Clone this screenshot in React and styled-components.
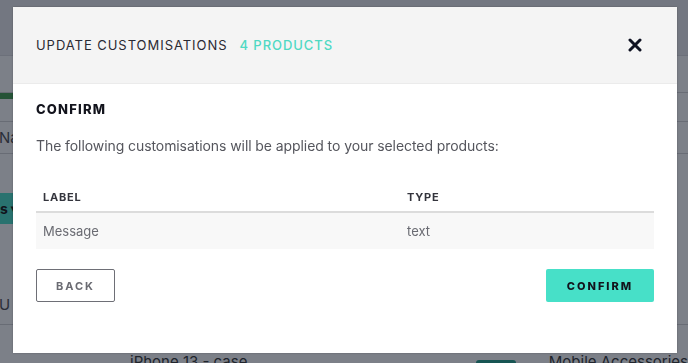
import React from 'react'
import styled, { createGlobalStyle } from 'styled-components'

const GlobalStyle = createGlobalStyle`
  html, body { margin: 0; padding: 0; }
  body {
    font-family: Inter, "Noto Sans", "Liberation Sans", sans-serif;
    background: #ffffff;
    overflow: hidden;
  }
`

const customisations = [{ label: 'Message', type: 'text' }]

const App = () => {
  return (
    <>
      <GlobalStyle />
      <Page>
        <TopBar />
        <Gap h={37} />
        <GreenRow>
          <GreenBar />
        </GreenRow>
        <Gap h={22} line />
        <TextRow h={31} line>
          <RowText>Na</RowText>
        </TextRow>
        <Gap h={39} />
        <TealButton>s ▾</TealButton>
        <Gap h={60} />
        <TextRow h={40} line>
          <RowText>U</RowText>
        </TextRow>
        <ProductRow>
          <ProductName>iPhone 13 - case</ProductName>
          <Tag />
          <Category>Mobile Accessories</Category>
        </ProductRow>
      </Page>

      <Overlay>
        <Modal>
          <Header>
            <Title>
              UPDATE CUSTOMISATIONS<Count>4 PRODUCTS</Count>
            </Title>
            <Close aria-label="close">
              <svg width="14" height="14" viewBox="0 0 14 14">
                <path d="M2 2 L12 12 M12 2 L2 12" stroke="#0f1222" strokeWidth="3" strokeLinecap="round" />
              </svg>
            </Close>
          </Header>
          <Body>
            <Heading>CONFIRM</Heading>
            <Intro>The following customisations will be applied to your selected products:</Intro>
            <Table>
              <HeadRow>
                <HeadCell>LABEL</HeadCell>
                <HeadCell>TYPE</HeadCell>
              </HeadRow>
              {customisations.map((c) => (
                <BodyRow key={c.label}>
                  <Cell>{c.label}</Cell>
                  <Cell>{c.type}</Cell>
                </BodyRow>
              ))}
            </Table>
            <Footer>
              <OutlineButton>BACK</OutlineButton>
              <PrimaryButton>CONFIRM</PrimaryButton>
            </Footer>
          </Body>
        </Modal>
      </Overlay>
    </>
  )
}

export default App

const Page = styled.div`
  width: 688px;
  height: 363px;
  display: flex;
  flex-direction: column;
  background: #fff;
  overflow: hidden;
`
const TopBar = styled.div`
  height: 55px;
  flex-shrink: 0;
  background: #ececef;
  border-bottom: 1px solid #dcdce0;
`
const Gap = styled.div`
  height: ${(p) => p.h}px;
  flex-shrink: 0;
  border-bottom: ${(p) => (p.line ? '1px solid #d2d2d6' : '0')};
`
const GreenRow = styled.div`
  height: 6px;
  flex-shrink: 0;
  border-top: 1px solid #d2d2d6;
  margin-top: -1px;
`
const GreenBar = styled.div`
  width: 40px;
  height: 6px;
  background: #3f9c4c;
`
const TextRow = styled.div`
  height: ${(p) => p.h}px;
  flex-shrink: 0;
  display: flex;
  align-items: center;
  border-bottom: ${(p) => (p.line ? '1px solid #d2d2d6' : '0')};
`
const RowText = styled.span`
  font-size: 15px;
  color: #4a4a50;
  margin-left: -1px;
`
const TealButton = styled.div`
  height: 31px;
  width: 60px;
  flex-shrink: 0;
  margin-left: -40px;
  background: #47e0c8;
  display: flex;
  align-items: center;
  padding-left: 40px;
  font-size: 14px;
  font-weight: 700;
  color: #111;
  white-space: nowrap;
`
const ProductRow = styled.div`
  flex-shrink: 0;
  height: 40px;
  display: flex;
  align-items: flex-start;
  padding-top: 27px;
`
const ProductName = styled.span`
  font-size: 15px;
  color: #333;
  margin-left: 130px;
  white-space: nowrap;
`
const Tag = styled.div`
  width: 50px;
  height: 20px;
  background: #1fa08a;
  border-radius: 3px;
  margin: 8px 0 0 229px;
`
const Category = styled.span`
  font-size: 15px;
  color: #333;
  margin-left: 33px;
  white-space: nowrap;
`

const Overlay = styled.div`
  position: fixed;
  inset: 0;
  background: rgba(17, 24, 39, 0.55);
  padding: 7px 11px 10px 13px;
  box-sizing: border-box;
`
const Modal = styled.div`
  width: 664px;
  height: 346px;
  background: #fff;
  display: flex;
  flex-direction: column;
  box-shadow: 0 0 2px rgba(0, 0, 0, 0.25);
`
const Header = styled.div`
  height: 76px;
  flex-shrink: 0;
  background: #f4f4f4;
  border-bottom: 1px solid #ebebeb;
  display: flex;
  align-items: center;
  justify-content: space-between;
  padding: 0 35px 0 23px;
`
const Title = styled.h1`
  margin: 0;
  font-size: 13px;
  font-weight: 400;
  letter-spacing: 0.95px;
  color: #2a2a33;
`
const Count = styled.span`
  margin-left: 12px;
  color: #4fd9c3;
  font-weight: 500;
`
const Close = styled.button`
  border: 0;
  background: none;
  padding: 0;
  width: 14px;
  height: 14px;
  display: flex;
  cursor: pointer;
`
const Body = styled.div`
  padding: 17px 23px 0;
  display: flex;
  flex-direction: column;
`
const Heading = styled.h2`
  margin: 0;
  font-size: 13px;
  line-height: 16px;
  font-weight: 800;
  letter-spacing: 1.2px;
  color: #12131c;
`
const Intro = styled.p`
  margin: 19px 0 0;
  font-size: 14px;
  line-height: 20px;
  letter-spacing: -0.08px;
  color: #55565d;
`
const Table = styled.div`
  margin-top: 27px;
  display: flex;
  flex-direction: column;
`
const HeadRow = styled.div`
  display: grid;
  grid-template-columns: 364px 1fr;
  height: 28px;
  align-items: center;
  border-bottom: 2px solid #dcdcdc;
`
const HeadCell = styled.div`
  padding-left: 7px;
  font-size: 11px;
  font-weight: 700;
  letter-spacing: 0.8px;
  color: #34353d;
`
const BodyRow = styled.div`
  display: grid;
  grid-template-columns: 364px 1fr;
  height: 36px;
  align-items: center;
  background: #f8f8f8;
`
const Cell = styled.div`
  padding-left: 7px;
  font-size: 13px;
  color: #6a6b72;
`
const Footer = styled.div`
  margin-top: 20px;
  display: flex;
  justify-content: space-between;
`
const OutlineButton = styled.button`
  width: 79px;
  height: 33px;
  background: #fff;
  border: 1px solid #6e6f76;
  border-radius: 2px;
  font-family: inherit;
  font-size: 11px;
  font-weight: 700;
  letter-spacing: 2px;
  color: #6a6b72;
  cursor: pointer;
`
const PrimaryButton = styled.button`
  width: 108px;
  height: 33px;
  background: #47e0c8;
  border: 0;
  border-radius: 2px;
  font-family: inherit;
  font-size: 11px;
  font-weight: 800;
  letter-spacing: 2px;
  color: #12131c;
  cursor: pointer;
`
